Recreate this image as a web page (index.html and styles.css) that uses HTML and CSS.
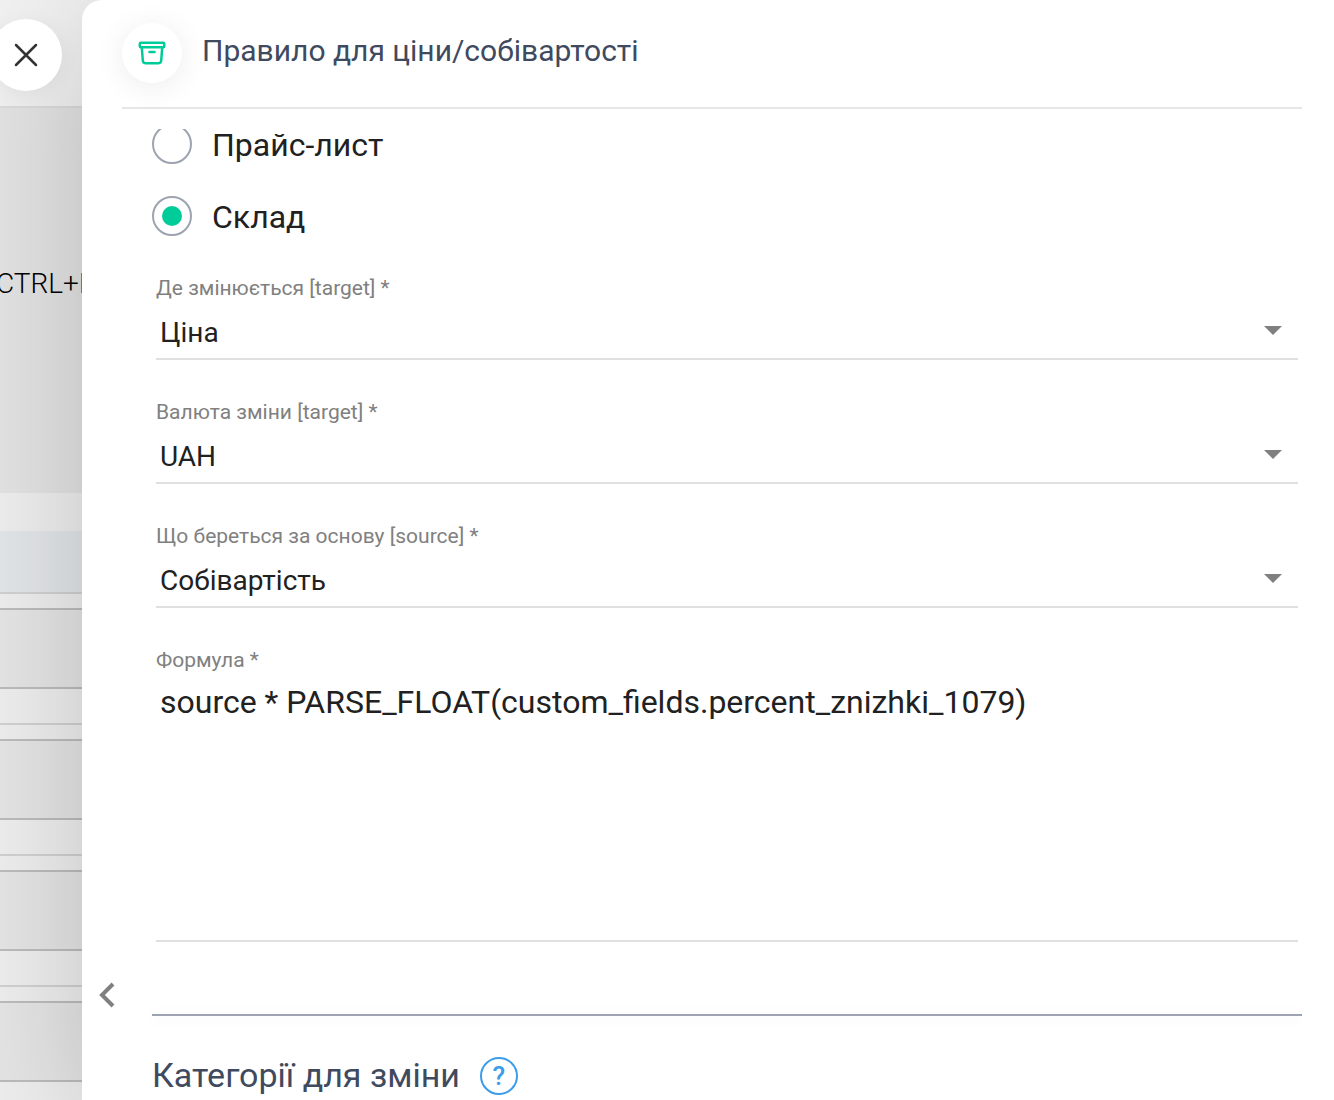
FILE: index.html
```html
<!DOCTYPE html>
<html lang="uk">
<head>
    <meta charset="UTF-8">
    <title>Правило для ціни/собівартості</title>
    <link rel="stylesheet" href="styles.css">
</head>
<body>

<!-- page under the drawer -->
<div class="page">
    <div class="topbar"></div>
    <div class="hint">CTRL+K</div>
    <div class="strip"></div>
    <div class="table-head"></div>
    <div class="record"><div class="record-box"></div></div>
    <div class="record"><div class="record-box"></div></div>
    <div class="record"><div class="record-box"></div></div>
    <div class="record"><div class="record-box"></div></div>
</div>

<div class="drawer">
    <header class="drawer-header">
        <span class="header-icon">
            <svg width="30" height="30" viewBox="0 0 30 30" fill="none" stroke="#00cc99" stroke-width="2.500" stroke-linejoin="round" stroke-linecap="round">
                <rect x="2.800" y="4.800" width="24.400" height="4.400" rx="1"/>
                <path d="M4.800 9.500l1 13q.2 2.700 2.700 2.700h13q2.500 0 2.700-2.700l1-13M12.500 14h5"/>
            </svg>
        </span>
        <h1>Правило для ціни/собівартості</h1>
    </header>

    <form class="drawer-body">
        <div class="radio-list">
            <label class="radio"><input type="radio" name="type"> Прайс-лист</label>
            <label class="radio"><input type="radio" name="type" checked> Склад</label>
        </div>

        <div class="fields">
            <div class="field">
                <label for="target">Де змінюється [target] *</label>
                <div class="select-wrap">
                    <select id="target"><option>Ціна</option></select>
                    <svg class="arrow" width="18" height="9" viewBox="0 0 18 9"><path d="M0 0h18l-9 9z" fill="#808080"/></svg>
                </div>
            </div>
            <div class="field">
                <label for="currency">Валюта зміни [target] *</label>
                <div class="select-wrap">
                    <select id="currency"><option>UAH</option></select>
                    <svg class="arrow" width="18" height="9" viewBox="0 0 18 9"><path d="M0 0h18l-9 9z" fill="#808080"/></svg>
                </div>
            </div>
            <div class="field">
                <label for="source">Що береться за основу [source] *</label>
                <div class="select-wrap">
                    <select id="source"><option>Собівартість</option></select>
                    <svg class="arrow" width="18" height="9" viewBox="0 0 18 9"><path d="M0 0h18l-9 9z" fill="#808080"/></svg>
                </div>
            </div>
            <div class="field">
                <label for="formula">Формула *</label>
                <textarea id="formula" spellcheck="false">source * PARSE_FLOAT(custom_fields.percent_znizhki_1079)</textarea>
            </div>
        </div>

        <hr>

        <section class="categories">
            <h2>Категорії для зміни</h2>
            <button type="button" class="btn-help">?</button>
        </section>
    </form>

    <button class="btn-collapse" aria-label="Згорнути">
        <svg width="18" height="26" viewBox="0 0 18 26" fill="none" stroke="#808080" stroke-width="4"><path d="M15 2L4 13l11 11"/></svg>
    </button>
</div>

<button class="btn-close" aria-label="Закрити">
    <svg width="24" height="24" viewBox="0 0 24 24" fill="none" stroke="#333" stroke-width="2.500" stroke-linecap="round"><path d="M2 2l20 20M22 2L2 22"/></svg>
</button>

</body>
</html>
```
FILE: styles.css
```css
* {
    box-sizing: border-box;
}

body {
    margin: 0;
    height: 100vh;
    position: relative;
    overflow: hidden;
    font-family: Roboto, "Liberation Sans", sans-serif;
    color: #212121;
}

button {
    border: none;
    padding: 0;
    background: none;
    cursor: pointer;
}

/* page under the drawer */
.page {
    height: 100%;
    overflow: hidden;
    background-color: #ededed;
}

.topbar {
    height: 108px;
    border-bottom: 2px solid #d8dadc;
    background-color: #f0f0f0;
}

.hint {
    height: 385px;
    padding-top: 159px;
    background-color: #e2e2e2;
    color: #000;
    font-size: 28px;
    line-height: 33px;
    font-weight: 300;
    text-indent: -4px;
}

.strip {
    height: 38px;
}

.table-head {
    height: 63px;
    background-color: #e2e5e8;
    border-bottom: 2px solid #d0d0d0;
}

.record {
    height: 131px;
    padding-top: 14px;
    border-bottom: 2px solid #d0d0d0;
}

.record-box {
    height: 81px;
    background-color: #e4e4e4;
    border-top: 2px solid #bbb;
    border-bottom: 2px solid #bbb;
}

/* drawer */
.drawer {
    position: absolute;
    top: 0;
    right: 0;
    bottom: 0;
    left: 82px;
    display: flex;
    flex-direction: column;
    padding: 0 32px 0 40px;
    background-color: #fff;
    border-top-left-radius: 20px;
    box-shadow: 0 20px 120px rgba(0, 0, 0, 0.18);
}

.drawer-header {
    display: flex;
    align-items: center;
    gap: 20px;
    height: 109px;
    padding-bottom: 2px;
    border-bottom: 2px solid #e6e6e6;
    flex-shrink: 0;
}

.header-icon {
    display: flex;
    align-items: center;
    justify-content: center;
    width: 60px;
    height: 60px;
    border-radius: 50%;
    background-color: #fff;
    box-shadow: 0 4px 30px rgba(0, 0, 0, 0.08);
}

h1 {
    margin: 0;
    padding-bottom: 4px;
    color: #3f4a5f;
    font-size: 30px;
    line-height: 36px;
    font-weight: 400;
}

.drawer-body {
    flex: 1;
    margin-top: 20px;
    padding-left: 30px;
    overflow: hidden;
}

.radio-list {
    display: flex;
    flex-direction: column;
    gap: 32px;
    margin-top: -5px;
}

.radio {
    display: flex;
    align-items: flex-start;
    gap: 20px;
    height: 40px;
    font-size: 32px;
    line-height: 42px;
}

.radio input {
    appearance: none;
    width: 40px;
    height: 40px;
    margin: 0;
    border: 2px solid #9da3b0;
    border-radius: 50%;
}

.radio input:checked {
    padding: 8px;
    background-color: #00cc99;
    background-clip: content-box;
}

.fields {
    display: flex;
    flex-direction: column;
    gap: 36px;
    padding: 36px 4px 72px;
}

.field label {
    display: block;
    color: #808080;
    font-size: 21px;
    line-height: 32px;
}

.select-wrap {
    position: relative;
}

.arrow {
    position: absolute;
    right: 16px;
    top: 22px;
}

select,
textarea {
    display: block;
    width: 100%;
    margin: 0;
    padding: 2px 4px 0;
    border: none;
    border-bottom: 2px solid #e0e0e0;
    border-radius: 0;
    background-color: transparent;
    color: #212121;
    font-family: inherit;
    outline: none;
}

select {
    appearance: none;
    height: 56px;
    font-size: 28px;
}

textarea {
    height: 266px;
    padding-top: 6px;
    font-size: 32px;
    line-height: 40px;
    resize: none;
}

hr {
    height: 2px;
    margin: 0;
    border: none;
    background-color: #9da3b0;
    box-shadow: 0 2px 16px rgba(0, 0, 0, 0.1);
}

.categories {
    display: flex;
    align-items: center;
    gap: 20px;
    padding-top: 40px;
}

h2 {
    margin: 0;
    padding-bottom: 2px;
    color: #3f4a5f;
    font-size: 34px;
    line-height: 38px;
    font-weight: 400;
}

.btn-help {
    width: 38px;
    height: 38px;
    border: 2px solid #3c9cec;
    border-radius: 50%;
    color: #3c9cec;
    font-family: inherit;
    font-size: 26px;
    font-weight: 500;
    line-height: 34px;
}

.btn-collapse {
    position: absolute;
    left: 16px;
    bottom: 92px;
    height: 26px;
}

.btn-close {
    position: absolute;
    top: 19px;
    left: -10px;
    display: flex;
    align-items: center;
    justify-content: center;
    width: 72px;
    height: 72px;
    border-radius: 50%;
    background-color: #fff;
    box-shadow: 0 4px 20px rgba(0, 0, 0, 0.05);
}
```
